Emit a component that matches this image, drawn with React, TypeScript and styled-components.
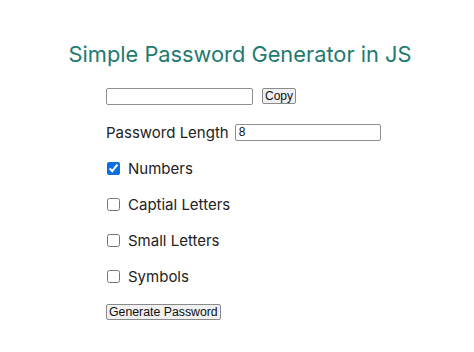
import React, { useState } from 'react';
import styled, { createGlobalStyle } from 'styled-components';

const GlobalStyle = createGlobalStyle`
  body {
    margin: 0;
    background: #ffffff;
    font-family: Inter, "Open Sans", sans-serif;
    color: #222222;
  }
`;

const Page = styled.div`
  padding-top: 38px;
`;

const Title = styled.h1`
  margin: 0 0 8px;
  padding-left: 6px;
  text-align: center;
  font-size: 21.8px;
  line-height: 32px;
  font-weight: 400;
  color: #1f7a70;
`;

const Form = styled.div`
  display: flex;
  flex-direction: column;
  padding-left: 106px;
`;

const Row = styled.div`
  display: flex;
  align-items: center;
  height: 36px;
  font-size: 15px;
`;

const TextInput = styled.input<{ $width: number }>`
  box-sizing: border-box;
  width: ${(p) => p.$width}px;
  height: 17px;
  margin: 0;
  padding: 0 3px;
  border: 1px solid #8f8f8f;
  border-radius: 2px;
  font-family: Arial, "Liberation Sans", sans-serif;
  font-size: 12px;
  color: #111;
`;

const Button = styled.button`
  height: 16px;
  margin: 0;
  padding: 0 2px;
  border: 1px solid #8a8a8a;
  border-radius: 2px;
  background: #f0f0f0;
  font-family: Arial, "Liberation Sans", sans-serif;
  font-size: 12.3px;
  line-height: 14px;
  color: #111;
`;

const CopyButton = styled(Button)`
  margin-left: 9px;
  font-size: 12px;
`;

const Label = styled.label`
  display: flex;
  align-items: center;
  cursor: pointer;
`;

const LengthLabel = styled.span`
  margin-right: 6px;
`;

const Check = styled.input`
  width: 13px;
  height: 13px;
  margin: 0 8px 0 1px;
  accent-color: #0a6fe0;
`;

const options = [
  { key: 'numbers', label: 'Numbers', on: true },
  { key: 'upper', label: 'Captial Letters', on: false },
  { key: 'lower', label: 'Small Letters', on: false },
  { key: 'symbols', label: 'Symbols', on: false },
];

function App() {
  const [length, setLength] = useState('8');
  const [checked, setChecked] = useState<Record<string, boolean>>(
    Object.fromEntries(options.map((o) => [o.key, o.on]))
  );

  return (
    <Page>
      <GlobalStyle />
      <Title>Simple Password Generator in JS</Title>
      <Form>
        <Row>
          <TextInput $width={147} readOnly />
          <CopyButton>Copy</CopyButton>
        </Row>
        <Row>
          <LengthLabel>Password Length</LengthLabel>
          <TextInput
            $width={146}
            value={length}
            onChange={(e) => setLength(e.target.value)}
          />
        </Row>
        {options.map((o) => (
          <Row key={o.key}>
            <Label>
              <Check
                type="checkbox"
                checked={checked[o.key]}
                onChange={() => setChecked({ ...checked, [o.key]: !checked[o.key] })}
              />
              {o.label}
            </Label>
          </Row>
        ))}
        <Row>
          <Button>Generate Password</Button>
        </Row>
      </Form>
    </Page>
  );
}

export default App;
